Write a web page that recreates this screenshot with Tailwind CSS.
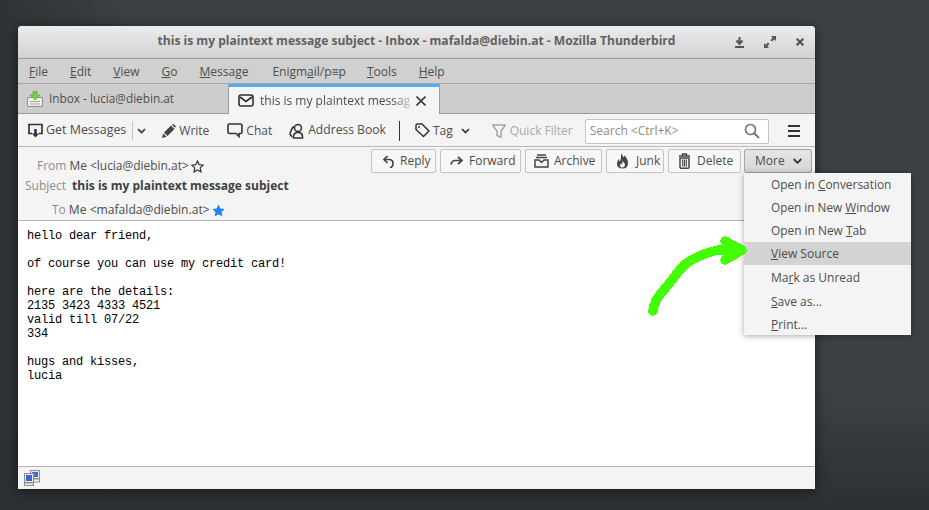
<!DOCTYPE html>
<html>
<head>
<meta charset="utf-8">
<script src="https://cdn.jsdelivr.net/npm/@tailwindcss/browser@4"></script>
</head>
<body class="m-0">
<div class="relative w-[929px] h-[510px] overflow-hidden bg-[#3d4145] pt-[26px] pl-[18px] font-['Open_Sans',sans-serif] text-[12px] text-[#4d4d4d]">
  <div class="absolute inset-0 bg-gradient-to-r from-[#2f3335] via-[#3d4145] via-15% to-[#3d4145]"></div>
  <div class="absolute inset-x-0 bottom-0 h-[120px] bg-gradient-to-b from-transparent to-[#2c3033]"></div>

  <div class="relative w-[797px] h-[463px] flex flex-col rounded-t-[4px] overflow-hidden bg-[#f4f4f4] shadow-[0_2px_14px_rgba(0,0,0,0.55)]">
    <!-- title -->
    <div class="h-[33px] shrink-0 flex items-center bg-gradient-to-b from-[#ececec] to-[#d2d2d2] border-b border-[#9c9c9c] relative">
      <div class="flex-1 text-center font-bold text-[12.07px] text-[#616161] pb-[1px]">this is my plaintext message subject - Inbox - mafalda@diebin.at - Mozilla Thunderbird</div>
      <div class="absolute right-[11px] top-[10px] h-[12px] flex items-center gap-[20px]">
        <svg class="w-[9px] h-[11px]" viewBox="0 0 9 11"><path d="M4.500 0v6M1.500 3.500l3 3.500 3-3.500" fill="none" stroke="#555" stroke-width="2"/><path d="M0 9h9v2H0z" fill="#555"/></svg>
        <svg class="w-[12px] h-[12px]" viewBox="0 0 12 12"><path d="M7 0h5v5l-1.700-1.700-2.200 2.200-1.600-1.600 2.200-2.200zM5 12H0V7l1.700 1.700 2.200-2.200 1.600 1.600-2.200 2.200z" fill="#555"/></svg>
        <svg class="w-[8px] h-[8px]" viewBox="0 0 8 8"><path d="M.7.7l6.600 6.600M7.300.7L.7 7.300" stroke="#555" stroke-width="2.200"/></svg>
      </div>
    </div>
    <!-- menu -->
    <div class="h-[25px] shrink-0 flex items-center bg-[#d0d0d0] border-b border-[#a6a6a6] pl-[11px] pt-[1px] gap-[22px]">
      <span><u>F</u>ile</span><span><u>E</u>dit</span><span><u>V</u>iew</span><span><u>G</u>o</span><span><u>M</u>essage</span><span class="ml-[2px] -mr-[1px]">Enigm<u>a</u>il/p≡p</span><span><u>T</u>ools</span><span><u>H</u>elp</span>
    </div>
    <!-- tabs -->
    <div class="h-[30px] shrink-0 flex bg-[#cdcdcd] border-b border-[#9c9c9c]">
      <div class="w-[210px] flex items-center pl-[9px] gap-[6px] text-[11.8px]">
        <svg class="w-[16px] h-[16px]" viewBox="0 0 16 16"><path d="M.5 6.500h15v9H.5z" fill="#ececec" stroke="#8f8f8f"/><path d="M3 10.500h10M3 13h10" stroke="#a8a8a8"/><path d="M6 0h4v4h3L8 9 3 4h3z" fill="#74d13d" stroke="#55a52c" stroke-width=".6"/></svg>
        <span>Inbox - lucia@diebin.at</span>
      </div>
      <div class="w-[212px] h-[30px] flex items-center bg-[#f4f4f4] border-t-[3px] border-t-[#5babea] border-x border-x-[#9c9c9c] pl-[9px] relative -mb-[1px]">
        <svg class="w-[16px] h-[13px] shrink-0" viewBox="0 0 16 13"><rect x="1" y="1" width="14" height="11" rx="2" fill="none" stroke="#2e2e2e" stroke-width="1.600"/><path d="M2 3l6 4.500L14 3" fill="none" stroke="#2e2e2e" stroke-width="1.600"/></svg>
        <span class="ml-[6px] w-[150px] whitespace-nowrap [mask-image:linear-gradient(to_right,black_88%,rgba(0,0,0,0.25))]">this is my plaintext messag</span>
        <svg class="w-[10px] h-[10px] ml-[6px]" viewBox="0 0 10 10"><path d="M.5.5l9 9M9.5.5l-9 9" stroke="#3a3a3a" stroke-width="1.600"/></svg>
      </div>
    </div>
    <!-- toolbar -->
    <div class="h-[33px] shrink-0 flex items-center border-b border-[#b8b8b8] bg-[#f4f4f4] pl-[10px] pt-[1px]">
      <svg class="w-[15px] h-[15px]" viewBox="0 0 15 15"><path d="M4 10.500H1V1.500h13v9h-3" fill="none" stroke="#333" stroke-width="1.700"/><path d="M6.200 6h2.600v4.500h2.400L7.500 14.500l-3.700-4h2.400z" fill="#333"/></svg>
      <span class="ml-[3px] text-[12.45px]">Get Messages</span>
      <span class="ml-[6px] w-px h-[18px] bg-[#c4c4c4]"></span>
      <svg class="ml-[4px] w-[9px] h-[6px]" viewBox="0 0 9 6"><path d="M1 1l3.500 3.500L8 1" fill="none" stroke="#333" stroke-width="1.700"/></svg>
      <svg class="ml-[16px] w-[14px] h-[14px]" viewBox="0 0 14 14"><path d="M0 14l1.200-4.600 3.400 3.400zM2 8.500L9 1.500l3.500 3.500-7 7zM10 .8l.8-.6q.6-.3 1 .1l1.800 1.800q.4.5 0 1l-.6.7z" fill="#444"/></svg>
      <span class="ml-[3px] mr-[1px]">Write</span>
      <svg class="ml-[17px] w-[16px] h-[15px]" viewBox="0 0 16 15"><path d="M2.500 1h11q1.500 0 1.500 1.500v6.500q0 1.500-1.500 1.500H12v3l-3-3H2.500Q1 10.500 1 9V2.500Q1 1 2.500 1z" fill="none" stroke="#333" stroke-width="1.600"/></svg>
      <span class="ml-[3px]">Chat</span>
      <svg class="ml-[17px] w-[16px] h-[16px]" viewBox="0 0 16 16"><circle cx="9" cy="5" r="3.500" fill="none" stroke="#333" stroke-width="1.500"/><path d="M4.500 15v-1.500q0-3 3-4h3q3 1 3 4V15zM5 3.500Q2.500 5 1 11l2 3" fill="none" stroke="#333" stroke-width="1.500"/></svg>
      <span class="ml-[3px] text-[12.12px]">Address Book</span>
      <span class="ml-[13px] w-px h-[20px] bg-[#333]"></span>
      <svg class="ml-[15px] w-[15px] h-[15px]" viewBox="0 0 15 15"><path d="M1 2.500Q1 1 2.500 1H7l7 7-5.500 5.500-7.500-7z" fill="none" stroke="#333" stroke-width="1.500"/><circle cx="4" cy="4" r="1" fill="#333"/></svg>
      <span class="ml-[3px]">Tag</span>
      <svg class="ml-[8px] w-[9px] h-[6px]" viewBox="0 0 9 6"><path d="M1 1l3.500 3.500L8 1" fill="none" stroke="#333" stroke-width="1.700"/></svg>
      <svg class="ml-[22px] w-[14px] h-[14px]" viewBox="0 0 14 14"><path d="M.5 1h13L9 7v6.500l-4-2V7z" fill="none" stroke="#a5a5a5" stroke-width="1.500"/></svg>
      <span class="ml-[4px] text-[#a9a9a9]">Quick Filter</span>
      <div class="ml-[12px] w-[184px] h-[25px] mt-[1px] bg-white border border-[#c4c4c4] rounded-[2px] flex items-center pl-[4px] text-[#8c8c8c] justify-between pr-[8px]">
        <span>Search &lt;Ctrl+K&gt;</span>
        <svg class="w-[16px] h-[16px]" viewBox="0 0 16 16"><circle cx="6.500" cy="6.500" r="5" fill="none" stroke="#777" stroke-width="1.700"/><path d="M10 10l5 5" stroke="#777" stroke-width="2"/></svg>
      </div>
      <svg class="ml-[19px] w-[12px] h-[12px]" viewBox="0 0 12 12"><path d="M0 1h12M0 6h12M0 11h12" stroke="#333" stroke-width="2"/></svg>
    </div>
    <!-- header -->
    <div class="h-[74px] shrink-0 relative border-b border-[#b4b4b4] bg-[#f4f4f4]">
      <div class="absolute right-[3px] top-[2px] flex gap-[4px]">
        <div class="w-[65px] h-[24px] flex items-center bg-[#f7f7f7] border border-[#c4c4c4] rounded-[2px] pl-[11px] gap-[6px]">
          <svg class="w-[11px] h-[13px]" viewBox="0 0 11 13"><path d="M4.500 1L1 4.500 4.500 8" fill="none" stroke="#444" stroke-width="1.700"/><path d="M1.500 4.500H6q4 0 4 4t-3 4" fill="none" stroke="#444" stroke-width="1.700"/></svg><span>Reply</span>
        </div>
        <div class="w-[81px] h-[24px] flex items-center bg-[#f7f7f7] border border-[#c4c4c4] rounded-[2px] pl-[9px] gap-[6px]">
          <svg class="w-[13px] h-[10px]" viewBox="0 0 13 10"><path d="M8 1l4 3.500L8 8" fill="none" stroke="#444" stroke-width="1.700"/><path d="M12 4.500H5Q2 4.500 1 8.500" fill="none" stroke="#444" stroke-width="1.700"/></svg><span>Forward</span>
        </div>
        <div class="w-[77px] h-[24px] flex items-center bg-[#f7f7f7] border border-[#c4c4c4] rounded-[2px] pl-[8px] gap-[5px]">
          <svg class="w-[15px] h-[14px]" viewBox="0 0 15 14"><path d="M3 1h9M2 3.500h11" stroke="#444" stroke-width="1.300"/><path d="M1 6h4l2.500 2.500L10 6h4v7H1z" fill="none" stroke="#444" stroke-width="1.500"/></svg><span>Archive</span>
        </div>
        <div class="w-[58px] h-[24px] flex items-center bg-[#f7f7f7] border border-[#c4c4c4] rounded-[2px] pl-[9px] gap-[7px]">
          <svg class="w-[13px] h-[16px]" viewBox="0 0 13 16"><path d="M5 .5q2 2 2 4 1-.5 1.500-2Q12 6 12 10q0 5.500-5.500 5.500T1 10.500q0-3 2-4.500 0 2 1 2.500 1.500-3 1-8z" fill="#444"/><path d="M6.500 8q2.500 2 2.500 4t-2.500 2.500T4 12.500q0-1.500 1-2 .5 1 1 .5t.5-3z" fill="#f7f7f7"/></svg><span>Junk</span>
        </div>
        <div class="w-[73px] h-[24px] -mr-[1px] flex items-center bg-[#f7f7f7] border border-[#c4c4c4] rounded-[2px] pl-[9px] gap-[6px]">
          <svg class="w-[13px] h-[16px]" viewBox="0 0 13 16"><path d="M1 3h11M4.500 3V1h4v2" fill="none" stroke="#444" stroke-width="1.400"/><path d="M2 5h9v9q0 1.300-1.300 1.300H3.300Q2 15.300 2 14z" fill="none" stroke="#444" stroke-width="1.500"/><path d="M4.700 6.500v7M6.500 6.500v7M8.300 6.500v7" stroke="#444" stroke-width="1.100"/></svg><span>Delete</span>
        </div>
        <div class="w-[68px] h-[24px] flex items-center bg-gradient-to-b from-[#e6e6e6] to-[#d6d6d6] border border-[#a6a6a6] rounded-[2px] pl-[10px] gap-[8px]">
          <span>More</span>
          <svg class="w-[9px] h-[6px]" viewBox="0 0 9 6"><path d="M.7 1l3.800 3.800L8.300 1" fill="none" stroke="#333" stroke-width="1.800"/></svg>
        </div>
      </div>
      <div class="absolute left-[19px] top-[10px] flex items-center"><span class="text-[#8d8d8d]">From</span><span class="ml-[3px] text-[11.95px]">Me &lt;lucia@diebin.at&gt;</span>
        <svg class="ml-[2px] w-[13px] h-[13px]" viewBox="0 0 13 13"><path d="M6.500 1l1.700 3.700 4 .5-3 2.700.8 4-3.500-2-3.500 2 .8-4-3-2.700 4-.5z" fill="none" stroke="#333" stroke-width="1.200"/></svg>
      </div>
      <div class="absolute left-[7px] top-[30px] flex items-center"><span class="text-[#8d8d8d]">Subject</span><span class="ml-[6px] font-bold text-[#3f3f3f]">this is my plaintext message subject</span></div>
      <div class="absolute left-[34px] top-[54px] flex items-center"><span class="text-[#8d8d8d]">To</span><span class="ml-[3px] text-[12.12px]">Me &lt;mafalda@diebin.at&gt;</span>
        <svg class="ml-[2px] w-[13px] h-[13px]" viewBox="0 0 13 13"><path d="M6.500 .5l1.900 3.900 4.300.6-3.100 3 .8 4.400-3.900-2.100-3.900 2.100.8-4.400-3.100-3 4.300-.6z" fill="#1a87f0"/></svg>
      </div>
    </div>
    <!-- body -->
    <div class="flex-1 bg-white pl-[9px] pt-[8px] font-['Liberation_Mono',monospace] text-[12px] tracking-[-0.2px] leading-[14px] text-black whitespace-pre">hello dear friend,

of course you can use my credit card!

here are the details:
2135 3423 4333 4521
valid till 07/22
334

hugs and kisses,
lucia</div>
    <!-- status -->
    <div class="h-[23px] shrink-0 bg-[#f4f4f4] border-t border-[#b4b4b4] flex items-center pl-[6px]">
      <svg class="w-[16px] h-[16px]" viewBox="0 0 16 16">
        <rect x="6.500" y=".5" width="9" height="8" fill="#e8e8e8" stroke="#8f8f8f"/><rect x="8" y="2" width="6" height="5" fill="#3f6fc6"/><rect x="6.500" y="9" width="9" height="3" fill="#eee" stroke="#8f8f8f"/>
        <rect x=".5" y="3.500" width="9" height="9" fill="#e8e8e8" stroke="#8f8f8f"/><rect x="2" y="5" width="6" height="6" fill="#3a66c4"/><rect x=".5" y="13" width="9" height="2.500" fill="#eee" stroke="#8f8f8f"/>
      </svg>
    </div>
  </div>

  <!-- popup menu -->
  <div class="absolute left-[744px] top-[173px] w-[167px] h-[162px] bg-[#f4f4f4] shadow-[0_1px_6px_rgba(0,0,0,0.35)] pl-[27px]">
    <div class="h-[23px] flex items-center whitespace-pre text-[11.9px]">Open in <u>C</u>onversation</div>
    <div class="h-[23px] flex items-center whitespace-pre text-[11.8px]">Open in New <u>W</u>indow</div>
    <div class="h-[23px] flex items-center whitespace-pre text-[11.9px]">Open in New <u>T</u>ab</div>
    <div class="h-[23px] flex items-center -ml-[27px] pl-[27px] bg-[#d3d3d3] whitespace-pre"><u>V</u>iew Source</div>
    <div class="h-[24px] mt-[1px] flex items-center whitespace-pre">Ma<u>r</u>k as Unread</div>
    <div class="h-[23px] flex items-center whitespace-pre"><u>S</u>ave as...</div>
    <div class="h-[23px] flex items-center whitespace-pre"><u>P</u>rint...</div>
  </div>

  <!-- hand drawn arrow -->
  <svg class="absolute left-[640px] top-[230px] w-[115px] h-[95px]" viewBox="640 230 115 95" shape-rendering="crispEdges">
    <path d="M653 311Q654 301 662 292T678 272T702 255T722 250L741 250M725 241L742 250L725 260" fill="none" stroke="#44ff00" stroke-width="9.500" stroke-linecap="round" stroke-linejoin="round"/>
    <path d="M725 241L745 250L725 260z" fill="#44ff00"/>
  </svg>
</div>
</body>
</html>
